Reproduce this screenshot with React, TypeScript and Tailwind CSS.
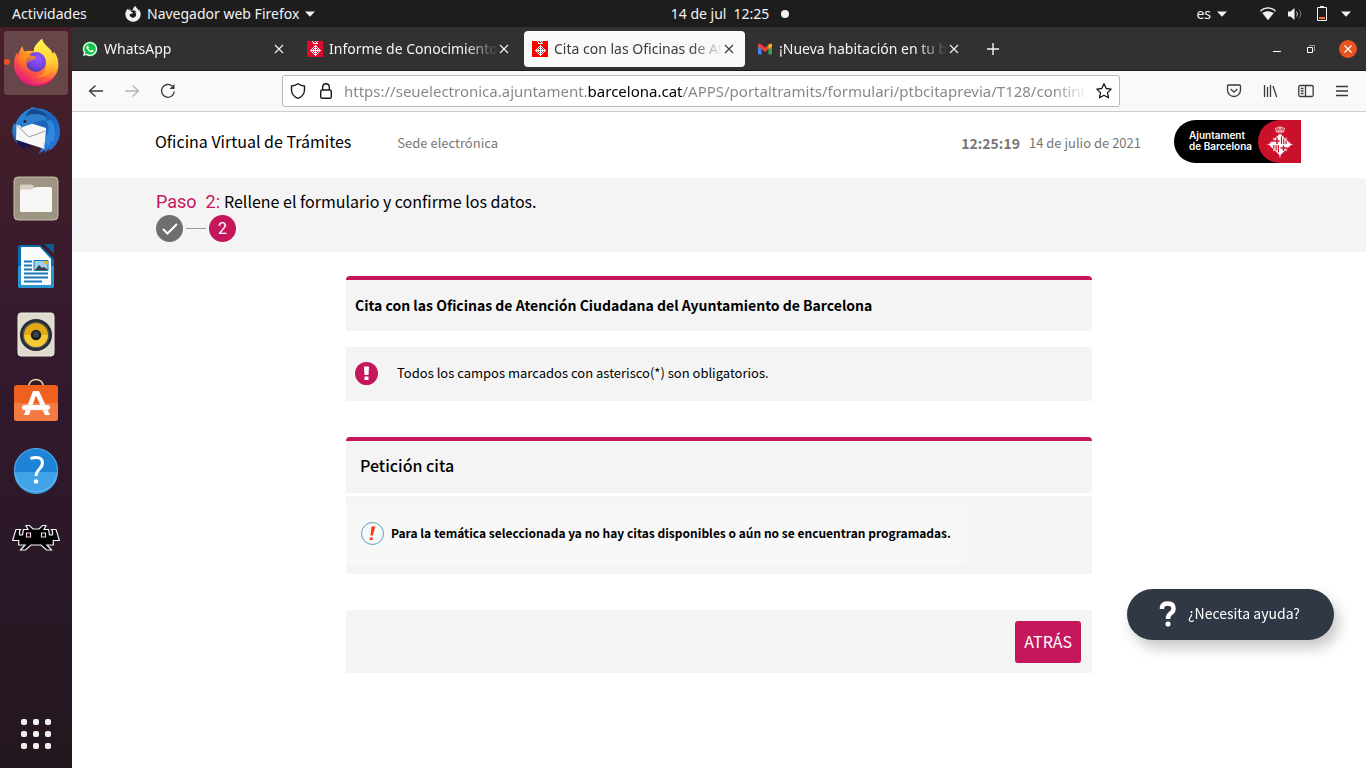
import type { ReactNode } from "react";
import { FaFirefoxBrowser, FaWhatsapp } from "react-icons/fa";

const UI = "font-['Noto_Sans',sans-serif]";
const WEB = "font-['Noto_Sans_CJK_SC',sans-serif]";

function Caret() {
  return (
    <svg width="10" height="6" viewBox="0 0 10 6" fill="#f2f2f2" aria-hidden="true">
      <path d="M0 .5h10L5 5.8z" />
    </svg>
  );
}

function TopBar() {
  return (
    <header className={`grid h-[27px] shrink-0 grid-cols-[1fr_auto_1fr] items-center bg-[#1d1d1d] px-3 text-[14px] leading-5 text-[#f2f2f2] ${UI}`}>
      <div className="flex items-center">
        <button className="w-[113px] text-left">Actividades</button>
        <button className="flex items-center gap-[6px]">
          <FaFirefoxBrowser size={16} />
          <span>Navegador web Firefox</span>
          <Caret />
        </button>
      </div>
      <button className="flex items-center gap-3 pl-[94px]">
        <span className="flex gap-[7px]"><span>14 de jul</span><span>12:25</span></span>
        <span className="size-2 rounded-full bg-[#f2f2f2]" />
      </button>
      <div className="flex items-center justify-end gap-[33px] pr-[3px]">
        <button className="flex items-center gap-[6px]"><span>es</span><Caret /></button>
        <button aria-label="Menú del sistema" className="flex items-center gap-[11px]">
          <svg width="16" height="14" viewBox="0 0 16 14" aria-hidden="true">
            <path d="M.8 4.2C5 .2 11 .2 15.200 4.200L8 13z" fill="none" stroke="#777" strokeWidth=".8" />
            <path d="M.5 3.800C5-.1 11-.1 15.500 3.800" fill="none" stroke="#f2f2f2" strokeWidth="1.300" />
            <path d="M2.500 6.100c3.300-2.500 7.700-2.500 11 0L8 13z" fill="#f2f2f2" />
          </svg>
          <svg width="16" height="14" viewBox="0 0 16 14" aria-hidden="true">
            <path d="M1 4.500h2.500L7.500 1v12L3.500 9.500H1z" fill="#f2f2f2" />
            <path d="M9.500 4.500q2 2.500 0 5" fill="none" stroke="#c8c8c8" />
            <path d="M12 2.500q3.500 4.500 0 9" fill="none" stroke="#777" />
          </svg>
          <svg width="16" height="16" viewBox="0 0 16 16" aria-hidden="true">
            <path d="M3.500 1.500h9v13h-9z" fill="none" stroke="#f2f2f2" />
            <path d="M6 0h4v1.500H6z" fill="#f2f2f2" />
            <path d="M5 11h6v2H5z" fill="#f37329" />
          </svg>
          <Caret />
        </button>
      </div>
    </header>
  );
}

function FirefoxIcon() {
  return (
    <svg width="48" height="48" viewBox="0 0 48 48" aria-hidden="true">
      <defs>
        <linearGradient id="ffBody" x1=".85" y1=".1" x2=".25" y2="1">
          <stop offset="0" stopColor="#fff44f" />
          <stop offset=".35" stopColor="#ffb52e" />
          <stop offset=".65" stopColor="#ff5a3c" />
          <stop offset="1" stopColor="#e31587" />
        </linearGradient>
        <linearGradient id="ffFlame" x1=".5" y1="0" x2=".6" y2="1">
          <stop offset="0" stopColor="#fff44f" />
          <stop offset=".6" stopColor="#ffd036" />
          <stop offset="1" stopColor="#ff8a1e" />
        </linearGradient>
        <radialGradient id="ffGlobe" cx=".6" cy=".35" r=".7">
          <stop offset="0" stopColor="#9059ff" />
          <stop offset=".6" stopColor="#7542e5" />
          <stop offset="1" stopColor="#4b3a9e" />
        </radialGradient>
        <linearGradient id="ffHead" x1="0" y1="0" x2="0" y2="1">
          <stop offset="0" stopColor="#ff980e" />
          <stop offset="1" stopColor="#ff6a2b" stopOpacity="0" />
        </linearGradient>
      </defs>
      <path d="M30 .8c1 4.500 4.500 7 8 10.500 1.200 1.300 2 3 2.500 4.500 1-.4 1.400-1.400 1.600-2.300 3.500 5 4.800 10 4.200 15.200C45.200 39.500 36 47.500 24.500 47.500 11.500 47.500 2 38 2 26c0-4.200 1-8.300 3-11.500l.8 3.200C7 13.500 8.600 10.500 10.700 8c.2 2.400.8 4.300 2 5.500 3-1 6-1 8.500-.3C23 8 26.500 4.500 30 .8z" fill="url(#ffBody)" />
      <path d="M30 .8c1 4.500 4.500 7 8 10.500 6 6.500 6.500 17.500-1 24.200-4 3.300-8.500 4-12 3.500 7-1.500 10-7 8.600-13-.9-4.200-4-6.600-8.400-7.600-2.300-2-3.400-4.600-3.200-8.200C23.500 6.500 26.500 3.700 30 .8z" fill="url(#ffFlame)" />
      <circle cx="24" cy="24" r="10" fill="url(#ffGlobe)" />
      <path d="M7 19c2.500-2.500 5.500-4 9-3.800 1.500 1.800 3.300 2.800 5.700 2.900 1.200.1 2.300.4 2.200 1.400-.3 2-3.300 2.700-5.200 3.500-2.300 1-3.800 2.500-3.700 4.300.4 4 3.500 7 8 7.200-4.500 2.500-10 1-13-3C7.500 28 6.500 23 7 19z" fill="url(#ffHead)" />
      <path d="M2.800 31C6 42 15 46.500 23 46.500c9 0 16.500-3.500 20.500-11-2 8-9.500 12.800-19 12.800C13 48.300 5.500 41.500 2.800 31z" fill="#e31570" opacity=".75" />
    </svg>
  );
}

function ThunderbirdIcon() {
  return (
    <svg width="48" height="48" viewBox="0 0 48 48" aria-hidden="true">
      <defs>
        <linearGradient id="tbBody" x1="0" y1="0" x2="1" y2="1">
          <stop offset="0" stopColor="#2f9be8" />
          <stop offset=".5" stopColor="#1b62b8" />
          <stop offset="1" stopColor="#2a7be0" />
        </linearGradient>
      </defs>
      <path d="M18 2.500C20 1 22 .8 24 2.200 38 2.500 48 12 48 25c0 9-4.500 16.500-11.500 20l1-2.500-5 4.500.8-3-7 4c3-4.500 3.500-7 3.500-10H15L5 37C1.500 33 .2 28.500.3 25c0-3 .6-6 1.900-8.500L3 19C6 11 10.500 6 18 2.500z" fill="url(#tbBody)" />
      <path d="M4 33c2 6 5 9 9.500 11L12 40l9 3-6-6z" fill="#1d1350" />
      <path d="M4.500 18.500 9 20l6-4 19 6-1.500 21L4 33.800z" fill="#f7f7f8" />
      <path d="m4.500 19 12.500 12 16-6" fill="none" stroke="#9b9ea8" />
      <path d="M8.500 20c-.5-6 3-12.500 10.500-15.500 10 0 15 4 15.500 10.500-6-1.500-10 0-14 2.500C16 20 13 19 9.500 22z" fill="#2d7fcd" />
      <path d="M20 3c9 .5 14 4 16.500 9-5-3-9-4-14-4-4 0-6 1-9 2.500C15 6.500 17 4 20 3z" fill="#154a91" />
      <path d="M34 15c4 5 3 10 .5 15L31 42l5-5-1 5 5.500-8 .5 3c3-8 3-17-2-23z" fill="#3591e6" opacity=".75" />
      <circle cx="13" cy="15.500" r="1.500" fill="#222" />
    </svg>
  );
}

function FilesIcon() {
  return (
    <svg width="48" height="48" viewBox="0 0 48 48" aria-hidden="true">
      <rect x="2" y="3" width="44" height="43" rx="4" fill="#9d9481" stroke="#c6bda8" />
      <path d="M8 12.500q0-2 2-2h9q2 0 2.700 2l.8 2H37v12H8z" fill="#d5cfc3" />
      <path d="M8 17q0-1.500 1.500-1.500h10L24 13h14.500q1.500 0 1.500 1.500v22q0 1.500-1.500 1.500h-29Q8 38 8 36.500z" fill="#f8f7f5" />
    </svg>
  );
}

function WriterIcon() {
  return (
    <svg width="48" height="48" viewBox="0 0 48 48" aria-hidden="true">
      <path d="M8 3h20l14 14v27q0 2-2 2H8q-2 0-2-2V5q0-2 2-2z" fill="#0b6bab" />
      <path d="M6 24h36v20q0 2-2 2H8q-2 0-2-2z" fill="#2a94ce" />
      <path d="M32 2h9q1 0 1 1v9z" fill="#0a5a94" />
      <path d="M9 6q0-1 1-1h18l11 12v25q0 1-1 1H10q-1 0-1-1z" fill="#fbfcfd" />
      <path d="M12 19.500h8M12 23.500h8M12 27.500h8M12 31.500h24M12 35.500h24M12 39.500h18" stroke="#1a78b7" strokeWidth="2" />
      <path d="M22 18.500h14v10H22z" fill="#9dd0ef" stroke="#1a78b7" />
      <path d="m23 28 4-5 3 3 2-1 4 3z" fill="#3c3c3c" />
      <path d="M32 19h4v3q-3 1-4-3z" fill="#f0b400" />
    </svg>
  );
}

function MusicIcon() {
  return (
    <svg width="48" height="48" viewBox="0 0 48 48" aria-hidden="true">
      <rect x="6" y="3" width="36" height="43" rx="3" fill="#dedace" stroke="#f0ede5" />
      <circle cx="24" cy="25" r="16" fill="#282b31" />
      <circle cx="24" cy="25" r="13.500" fill="#4b4f58" />
      <circle cx="24" cy="25" r="12" fill="#e0aa14" />
      <path d="M12 25a12 12 0 0 0 24 0z" fill="#f3c934" />
      <circle cx="24" cy="25" r="5.200" fill="#1d1f22" />
      <circle cx="24" cy="24.500" r="3" fill="#3d4045" />
    </svg>
  );
}

function SoftwareIcon() {
  return (
    <svg width="48" height="48" viewBox="0 0 48 48" aria-hidden="true">
      <path d="M17 9c-.5-4 2-7.500 7-7.500S31.500 5 31 9" fill="none" stroke="#f6d9a8" strokeWidth="1.500" />
      <rect x="2" y="7" width="44" height="36" rx="3" fill="#f0601f" />
      <path d="M2 25h44v15q0 3-3 3H5q-3 0-3-3z" fill="#f57a42" />
      <path d="M21 13h6L38 37h-5L24 17.500 17 37h-5z" fill="#fff" />
      <rect x="10" y="27" width="28" height="5" rx="2.500" fill="#fff" stroke="#e6c9b9" strokeWidth=".5" />
    </svg>
  );
}

function HelpIcon() {
  return (
    <svg width="48" height="48" viewBox="0 0 48 48" aria-hidden="true">
      <circle cx="24" cy="24" r="22" fill="#1d84d8" />
      <path d="M2 26h44A22 22 0 0 1 2 26z" fill="#41a3e6" />
      <circle cx="24" cy="24" r="21.500" fill="none" stroke="#7bbdec" strokeWidth=".7" />
      <path d="M18.500 12.500c7-2.500 12-.5 12 4.500 0 6-6.500 6-6.500 13" fill="none" stroke="#fff" strokeWidth="3" />
      <circle cx="24" cy="35.500" r="2.300" fill="#fff" />
    </svg>
  );
}

function RetroArchIcon() {
  return (
    <svg width="48" height="28" viewBox="0 0 48 28" aria-hidden="true">
      <path
        d="M14 1.500h3.500L21 5h6l3.500-3.500H34l-2 4h4.500L37.500 11H40.500V7L39.500 5.500H44L47.400 16.500H41.300V21H35L39.500 26H34.500L29 21H19L13.500 26H8.500L13 21H6.700V16.500H.6L4 5.500H8.500L7.500 7V11H10.500L11.500 5.500H16z"
        fill="#000"
        stroke="#f4f4f4"
        strokeWidth="1.200"
      />
      <path d="M14.500 9h4v4h-4zM29.500 9h4v4h-4z" fill="#000" stroke="#f2cfe2" strokeWidth="1.200" />
    </svg>
  );
}

const launchers: { name: string; icon: ReactNode }[] = [
  { name: "Firefox", icon: <FirefoxIcon /> },
  { name: "Thunderbird", icon: <ThunderbirdIcon /> },
  { name: "Archivos", icon: <FilesIcon /> },
  { name: "LibreOffice Writer", icon: <WriterIcon /> },
  { name: "Rhythmbox", icon: <MusicIcon /> },
  { name: "Software", icon: <SoftwareIcon /> },
  { name: "Ayuda", icon: <HelpIcon /> },
  { name: "RetroArch", icon: <RetroArchIcon /> },
];

function Dock() {
  return (
    <nav aria-label="Aplicaciones" className="flex w-[72px] shrink-0 flex-col items-center gap-1 bg-linear-to-b from-[#491f29] via-[#31192d] via-50% to-[#23171f] pt-1 pb-[2px]">
      {launchers.map((app, i) => (
        <button
          key={app.name}
          aria-label={app.name}
          className={`flex size-16 items-center justify-center rounded-[3px] pb-[2px] ${i === 0 ? "relative bg-[#674649]" : ""}`}
        >
          {i === 0 && <span className="absolute left-0 size-[6px] rounded-full bg-[#e95420]" />}
          {app.icon}
        </button>
      ))}
      <button aria-label="Mostrar aplicaciones" className="mt-auto grid size-16 grid-cols-[repeat(3,6px)] place-content-center gap-[6px]">
        {Array.from({ length: 9 }, (_, i) => (
          <span key={i} className="size-[6px] rounded-[2px] bg-[#f2f2ee]" />
        ))}
      </button>
    </nav>
  );
}

function CrestFavicon({ color }: { color: string }) {
  return (
    <svg width="16" height="16" viewBox="0 0 16 16" aria-hidden="true" shapeRendering="crispEdges">
      <path d="M0 0h16v16H0z" fill={color} />
      <path d="M5 0h1v1H5zM8 0h1v1H8zM10 0h1v1h-1zM6 1h1v1H6zM9 1h1v1H9zM6 2h5v1H6zM8 4h1v11H8zM3 9h11v1H3z" fill="#fff" />
      <path d="M7 5h1v1H7zM9 5h1v1H9zM6 6h1v1H6zM10 6h1v1h-1zM5 7h1v1H5zM7 7h1v1H7zM9 7h1v1H9zM11 7h1v1h-1zM4 8h1v1H4zM6 8h1v1H6zM10 8h1v1h-1zM12 8h1v1h-1zM4 10h1v1H4zM6 10h1v1H6zM10 10h1v1h-1zM12 10h1v1h-1zM5 11h1v1H5zM7 11h1v1H7zM9 11h1v1H9zM11 11h1v1h-1zM6 12h1v1H6zM10 12h1v1h-1zM7 13h1v1H7zM9 13h1v1H9z" fill="#fff" />
    </svg>
  );
}

function WhatsAppFavicon() {
  return (
    <svg width="16" height="16" viewBox="0 0 16 16" aria-hidden="true">
      <circle cx="8" cy="8" r="7.500" fill="#12c44a" />
      <FaWhatsapp size={16} color="#fff" />
    </svg>
  );
}

function GmailFavicon() {
  return (
    <svg width="16" height="16" viewBox="0 0 16 16" aria-hidden="true">
      <path d="M1 4.500 4.500 7v6.500H2q-1 0-1-1z" fill="#4285f4" />
      <path d="M15 4.500 11.500 7v6.500H14q1 0 1-1z" fill="#34a853" />
      <path d="M1 4q0-2.200 2.200-1.200L8 6.500l4-3V8L8 11 1 5.500z" fill="#ea4335" />
      <path d="m11.500 3.800 1.500-1q2-.8 2 1.400v1.300L11.500 8z" fill="#fbbc04" />
    </svg>
  );
}

const tabs: { title: string; icon: ReactNode; active?: boolean }[] = [
  { title: "WhatsApp", icon: <WhatsAppFavicon /> },
  { title: "Informe de Conocimiento", icon: <CrestFavicon color="#dc0a2d" /> },
  { title: "Cita con las Oficinas de At", icon: <CrestFavicon color="#ff0000" />, active: true },
  { title: "¡Nueva habitación en tu b", icon: <GmailFavicon /> },
];

function TabStrip() {
  return (
    <div className={`flex h-11 shrink-0 items-center gap-1 border-b border-[#1b1a1a] bg-[#323031] pl-[2px] text-[14px] leading-5 ${UI}`}>
      <div role="tablist" className="flex gap-1">
        {tabs.map((t) => (
          <div key={t.title} className={`flex h-9 w-[221px] items-center rounded-[4px] pr-[10px] pl-2 ${t.active ? "bg-[#f9f9fa] text-[#3a3a3a]" : "text-[#f5f5f5]"}`}>
            <button role="tab" aria-selected={!!t.active} className="flex min-w-0 flex-1 items-center gap-[6px]">
              <span className="shrink-0">{t.icon}</span>
              <span className="min-w-0 flex-1 overflow-hidden text-left whitespace-nowrap mask-[linear-gradient(to_left,transparent,black_32px)]">{t.title}</span>
            </button>
            <button aria-label={`Cerrar ${t.title}`}>
              <svg width="12" height="12" viewBox="0 0 12 12" stroke="currentColor" strokeWidth="1.100" aria-hidden="true">
                <path d="m2 2 8 8M10 2l-8 8" />
              </svg>
            </button>
          </div>
        ))}
      </div>
      <button aria-label="Nueva pestaña" className="ml-3 text-[#f5f5f5]">
        <svg width="14" height="14" viewBox="0 0 14 14" stroke="currentColor" strokeWidth="1.400" aria-hidden="true"><path d="M7 1v12M1 7h12" /></svg>
      </button>
      <div className="ml-auto flex items-center gap-6 pr-[9px] text-white">
        <button aria-label="Minimizar" className="pr-1">
          <svg width="10" height="10" viewBox="0 0 10 10" aria-hidden="true"><path d="M2 7h8v1H2z" fill="currentColor" /></svg>
        </button>
        <button aria-label="Restaurar" className="-ml-1">
          <svg width="10" height="10" viewBox="0 0 10 10" fill="none" aria-hidden="true">
            <path d="M2.500 3.500h5v5h-5z" stroke="currentColor" />
            <path d="M4 1.500h5.500V7" stroke="#999" />
          </svg>
        </button>
        <button aria-label="Cerrar ventana" className="flex size-[18px] items-center justify-center rounded-full bg-[#e95420]">
          <svg width="8" height="8" viewBox="0 0 8 8" stroke="#fff" strokeWidth="1.300" aria-hidden="true"><path d="m.5.5 7 7M7.500.5l-7 7" /></svg>
        </button>
      </div>
    </div>
  );
}

function ToolButton({ label, dim, children }: { label: string; dim?: boolean; children: ReactNode }) {
  return (
    <button aria-label={label} className={`flex size-9 items-center justify-center ${dim ? "text-[#b4b4b6]" : "text-[#3a3a3c]"}`}>
      <svg width="16" height="16" viewBox="0 0 16 16" fill="none" stroke="currentColor" strokeWidth="1.300" aria-hidden="true">{children}</svg>
    </button>
  );
}

function Toolbar() {
  return (
    <div className={`flex h-[41px] shrink-0 items-center border-b border-[#ccccce] bg-[#f9f9fa] px-[6px] ${UI}`}>
      <ToolButton label="Atrás"><path d="M15 8H1.500M7.500 2.500 1.500 8l6 5.500" /></ToolButton>
      <ToolButton label="Adelante" dim><path d="M1 8h13.500M8.500 2.500l6 5.500-6 5.500" /></ToolButton>
      <ToolButton label="Recargar"><path d="M14.300 8.500A6.400 6.400 0 1 1 12.500 3.400" /><path d="M14.500 1v5h-5z" fill="currentColor" stroke="none" /></ToolButton>
      <div className="mx-24 flex h-8 min-w-0 flex-1 items-center rounded-[3px] border border-[#b9b9bb] bg-white px-[7px] text-[#1a1a1a]">
        <svg width="16" height="16" viewBox="0 0 16 16" fill="none" stroke="currentColor" strokeWidth="1.400" strokeLinejoin="round" aria-hidden="true">
          <path d="M8 .8C6 2.200 4 3 1.500 3v4C1.700 11 4.500 14 8 15.300c3.500-1.300 6.300-4.300 6.500-8.300V3C12 3 10 2.200 8 .8z" />
        </svg>
        <svg className="ml-3" width="16" height="16" viewBox="0 0 16 16" fill="none" stroke="currentColor" strokeWidth="1.400" aria-hidden="true">
          <rect x="2.700" y="7" width="10.600" height="8.200" rx="1.500" /><path d="M4.700 7V4a3.300 3.300 0 0 1 6.600 0v3" />
        </svg>
        <input
          aria-label="Dirección"
          className="ml-[10px] min-w-0 flex-1 bg-[linear-gradient(to_right,#84848a_244px,#000_244px,#000_339px,#84848a_339px,#84848a_710px,transparent_744px)] bg-clip-text text-[15px] leading-5 text-transparent outline-none"
          defaultValue="https://seuelectronica.ajuntament.barcelona.cat/APPS/portaltramits/formulari/ptbcitaprevia/T128/continu"
        />
        <button aria-label="Añadir a marcadores" className="ml-2">
          <svg width="16" height="16" viewBox="0 0 16 16" fill="none" stroke="currentColor" strokeWidth="1.300" strokeLinejoin="round" aria-hidden="true">
            <path d="m8 .8 2.200 4.700 5 .6-3.700 3.500 1 5.200L8 12.300l-4.500 2.500 1-5.200L.8 6.100l5-.6z" />
          </svg>
        </button>
      </div>
      <ToolButton label="Pocket"><path d="M2.800 2h10.400q1.300 0 1.300 1.300V7a6.500 6.500 0 0 1-13 0V3.300Q1.500 2 2.800 2zM4.700 6 8 9.200 11.300 6" /></ToolButton>
      <ToolButton label="Biblioteca"><path d="M2.500 2v12M5.500 4v10M8.500 2v12M11 3l3.700 11" /></ToolButton>
      <ToolButton label="Barra lateral"><rect x=".8" y="2.500" width="14.400" height="11" rx="1.500" /><path d="M7.500 2.500v11M2.800 5.500h2.700M2.800 8h2.700M2.800 10.500h2.700" /></ToolButton>
      <ToolButton label="Menú"><path d="M2 3.500h12M2 8h12M2 12.500h12" /></ToolButton>
    </div>
  );
}

function CityLogo() {
  return (
    <a href="#inicio" className="ml-[33px] flex h-[43px] items-center rounded-l-full bg-black pl-[15px]">
      <span className="w-[69px] font-['Inter',sans-serif] text-[10px] leading-[11px] font-semibold whitespace-nowrap text-white">Ajuntament<br />de Barcelona</span>
      <span className="flex size-[43px] items-center justify-center rounded-l-full bg-[#cb102c]">
        <svg width="26" height="34" viewBox="0 0 26 34" aria-hidden="true">
          <path d="M9.500 8 8.500 4.500q2-1.500 4.500-.5 2.500-1 4.500.5L16.500 8zM13 2V8M10.800 4.500l.7 3.500M15.200 4.500 14.500 8" fill="none" stroke="#fff" strokeWidth=".8" />
          <path d="M13 9.500 24.500 20.500 13 31.500 1.500 20.500z" fill="#fff" />
          <path d="M10 13.500v6.500M5 17h7.500M16.500 21.500v5.500M13.500 24h7" stroke="#cb102c" strokeWidth="1.400" />
          <path d="M14.500 12.500v7.500M16.800 14.500V20M19.100 16.500V20M6.800 21v3.500M9.100 21v5.500M11.400 21v7.500" stroke="#cb102c" strokeWidth="1.200" />
          <path d="M13 31v2.500M.5 20.500h1M24.500 20.500h1M6 14l1.500 1.200M20 14l-1.500 1.200M6 27l1.500-1.200M20 27l-1.500-1.200" stroke="#fff" strokeWidth=".9" />
        </svg>
      </span>
    </a>
  );
}

function WebPage() {
  return (
    <div className={`min-h-0 flex-1 bg-white text-black ${WEB}`}>
      <div className="flex h-[66px] items-center pr-[65px] pl-[83px] pb-2">
        <span className="text-[16px] leading-6">Oficina Virtual de Trámites</span>
        <a href="#sede" className="ml-[46px] pt-1 text-[13px] leading-6 text-[#777]">Sede electrónica</a>
        <time className="ml-auto flex gap-[9px] pt-1 text-[13px] leading-6 text-[#777]">
          <span className="text-[14px] font-bold">12:25:19</span>
          <span>14 de julio de 2021</span>
        </time>
        <CityLogo />
      </div>
      <section className="h-[74px] bg-[#f4f4f4] pt-3 pl-[84px]">
        <h1 className="flex h-[25px] gap-1 text-[16px] leading-[23px]">
          <span className="font-['Roboto',sans-serif] text-[18px] whitespace-pre text-[#c4175c]">Paso  2:</span>
          <span>Rellene el formulario y confirme los datos.</span>
        </h1>
        <ol className="flex items-center gap-[3px]">
          <li aria-label="1" className="flex size-[27px] items-center justify-center rounded-full bg-[#6f6f6f]">
            <svg width="16" height="12" viewBox="0 0 16 12" fill="none" stroke="#fff" strokeWidth="2" aria-hidden="true"><path d="m1 6 4.500 4.500L15 1" /></svg>
          </li>
          <li aria-hidden="true" className="h-px w-5 bg-[#999]" />
          <li className="flex size-[27px] items-center justify-center rounded-full bg-[#c4175c] font-['Roboto',sans-serif] text-[16px] text-white">2</li>
        </ol>
      </section>
      <main className="mx-auto mt-6 w-full max-w-[746px]">
        <h2 className="rounded-t-[4px] border-t-4 border-[#c4175c] bg-[#f4f4f4] px-[9px] pt-[13px] pb-[14px] text-[14px] leading-6 font-bold">
          Cita con las Oficinas de Atención Ciudadana del Ayuntamiento de Barcelona
        </h2>
        <p className="mt-4 flex h-[54px] items-center gap-[19px] bg-[#f4f4f4] px-[9px] pb-[2px] text-[13px] leading-6">
          <svg width="23" height="23" viewBox="0 0 23 23" aria-hidden="true">
            <circle cx="11.500" cy="11.500" r="11.500" fill="#c4175c" />
            <path d="M9 4.500h5L13.500 13h-4zM9.500 14.500h4v3.500h-4z" fill="#fff" />
          </svg>
          Todos los campos marcados con asterisco(*) son obligatorios.
        </p>
        <h2 className="mt-9 h-14 rounded-t-[4px] border-t-4 border-[#c4175c] bg-[#f4f4f4] px-[14px] pt-3 text-[16px] leading-6 font-medium">Petición cita</h2>
        <div className="mt-[3px] flex bg-[#f4f4f4] pt-2 pb-[10px]">
          <p className="flex h-[60px] items-center gap-[7px] bg-[#f8f8f8] pr-4 pb-[2px] pl-[15px] text-[12px] leading-6 font-bold">
            <svg width="23" height="23" viewBox="0 0 23 23" aria-hidden="true">
              <circle cx="11.500" cy="11.500" r="11" fill="#f4f9fb" stroke="#5c9cbd" />
              <path d="M10.500 4.500h4L11.700 13.500H9.500zM9 15.500h3L11.500 18H8.500z" fill="#f83a0c" />
            </svg>
            Para la temática seleccionada ya no hay citas disponibles o aún no se encuentran programadas.
          </p>
        </div>
        <div className="mt-9 flex justify-end bg-[#f4f4f4] pt-[11px] pr-[11px] pb-[10px]">
          <button className="h-[42px] rounded-[3px] bg-[#c4175c] px-[9px] pb-[2px] text-[16px] text-white">ATRÁS</button>
        </div>
      </main>
      <button className="fixed right-8 bottom-32 flex h-[51px] items-center gap-[11px] rounded-full bg-[#313845] pr-[34px] pb-[2px] pl-8 text-[14px] text-white shadow-[5px_8px_14px_rgba(0,0,0,0.22)]">
        <svg width="18" height="26" viewBox="0 0 18 26" fill="none" aria-hidden="true">
          <path d="M3 8V6.500Q3.500 2.500 9 2.500t5.500 5q0 3-3 5Q9 14.300 9 18" stroke="#fff" strokeWidth="4.500" />
          <rect x="6.500" y="20.500" width="5" height="5" rx="2" fill="#fff" />
        </svg>
        ¿Necesita ayuda?
      </button>
    </div>
  );
}

export default function App() {
  return (
    <div className="flex h-screen flex-col overflow-hidden">
      <TopBar />
      <div className="flex min-h-0 flex-1">
        <Dock />
        <div className="flex min-w-0 flex-1 flex-col">
          <TabStrip />
          <Toolbar />
          <WebPage />
        </div>
      </div>
    </div>
  );
}
